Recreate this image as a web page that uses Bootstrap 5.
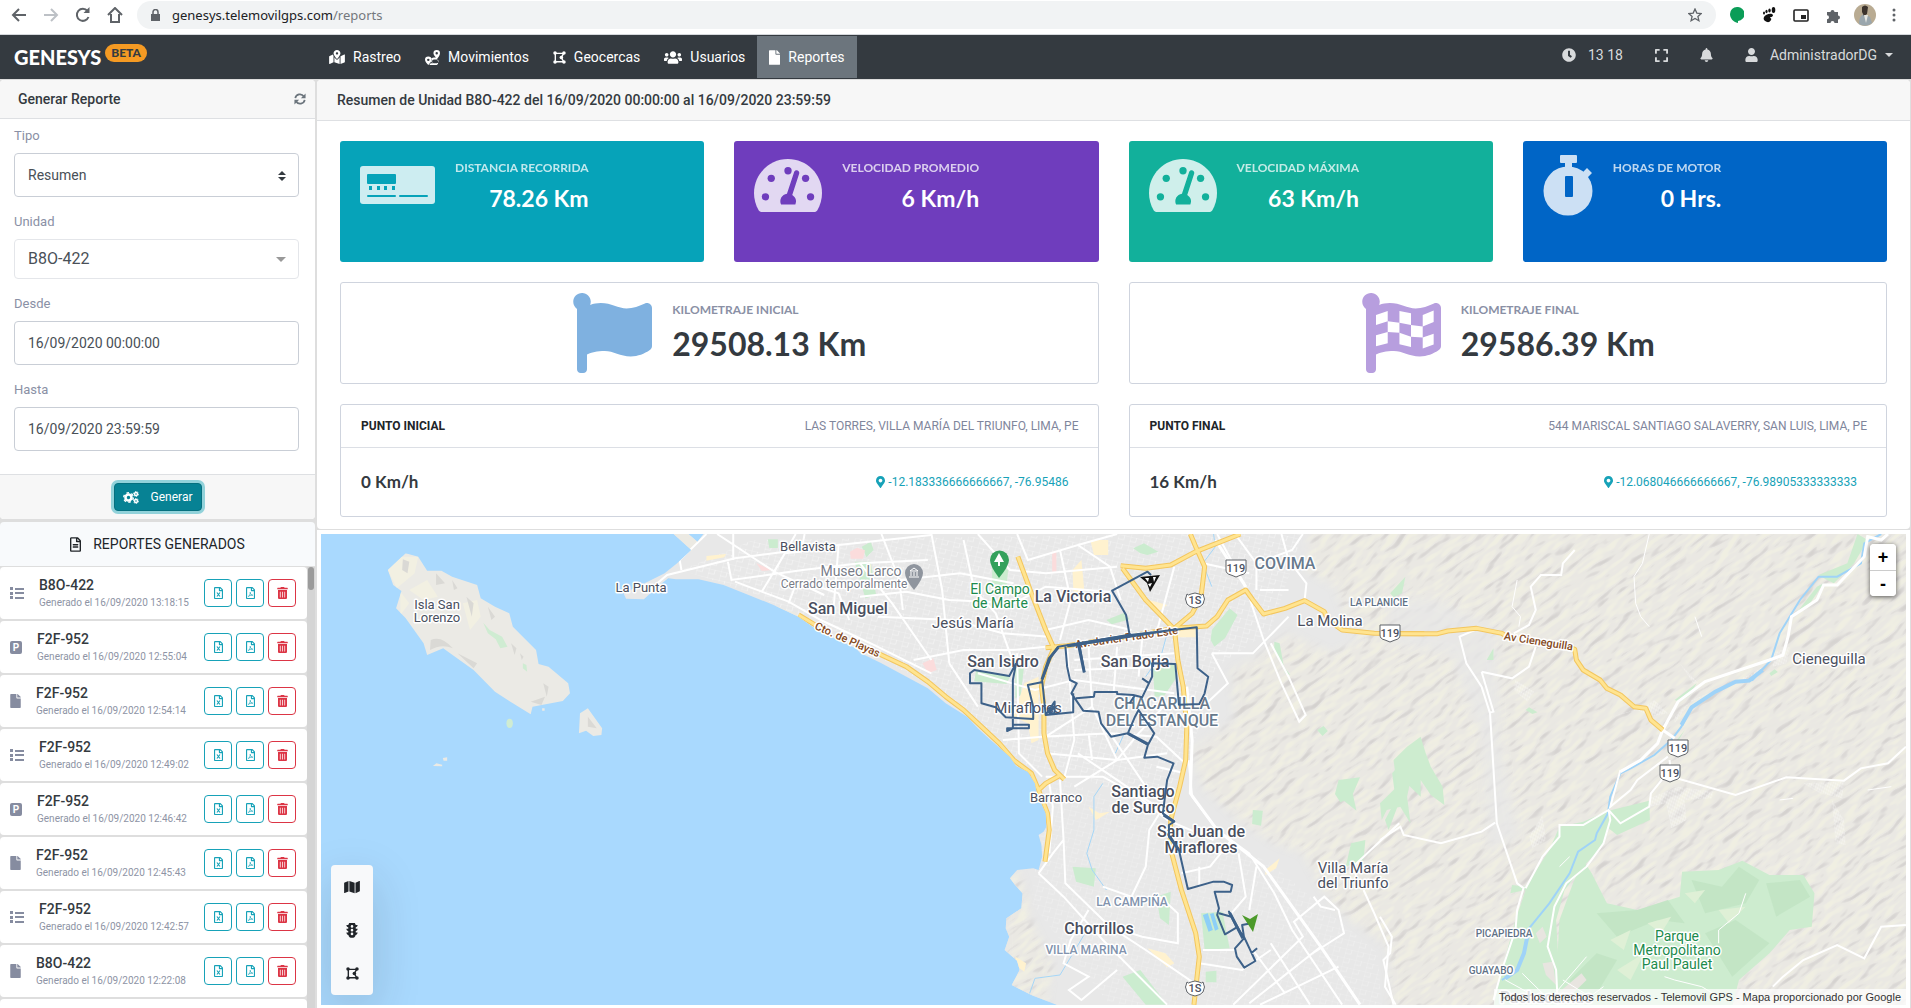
<!DOCTYPE html>
<html lang="es">
<head>
<meta charset="utf-8">
<meta name="viewport" content="width=device-width, initial-scale=1">
<title>Genesys - Reportes</title>
<link href="https://cdn.jsdelivr.net/npm/bootstrap@5.3.0/dist/css/bootstrap.min.css" rel="stylesheet">
<style>
body{font-family:Roboto,"Liberation Sans",sans-serif;font-size:14px;line-height:20px;color:#343a40;background:#dedede}
svg{display:block;flex:none}
button{font-family:inherit}
.browser{height:35px;background:#fff;border-bottom:1px solid #d5d8dc;padding:1px 10px 5px 9px}
.tool{border:0;background:none;padding:0;width:20px;display:flex;justify-content:center}
.omni{height:28px;border-radius:14px;background:#f1f3f4;font:13px/28px "Noto Sans",sans-serif;color:#74787d;padding:0 14px}
.omni b{font-weight:400;color:#202124}
.topnav{height:44px;background:#343a40;color:#fff;font-size:14px}
.brandbox{width:317px;padding-left:14px;font:900 20px/24px Lato,sans-serif;color:#fff}
.beta{background:#f59a23;color:#343a40;border-radius:9px;font:900 12px/18px Lato,sans-serif;padding:0 6px;margin-bottom:8px}
.topnav .nav-link{color:#fff;height:42px;padding:0 12px;gap:8px;display:flex;align-items:center}
.topnav .nav-link.active{background:#6c757d}
.userbar{color:#d8dadc;padding-right:18px;margin-bottom:4px}
.userbar button{color:inherit;border:0;background:none;padding:0;display:flex;align-items:center}
.userbar a{color:inherit;text-decoration:none}
.side{flex:0 0 315px}
.main{border-right:1px solid #dedede}
.panelbox{background:#fff;border-radius:4px;overflow:hidden;margin-top:1px}
.headbar{background:#f7f7f7;border-bottom:1px solid #dee0e3;font-weight:500;font-size:14px}
.side .headbar{height:39px;padding:0 9px 0 18px}
.main .headbar{height:41px;padding:0 20px}
.formarea{padding:7px 16px 23px 14px}
.formarea label{font-size:13px;line-height:20px;color:#8a90a5;margin-bottom:7px;display:block}
.field{height:44px;border:1px solid #c9ced6;border-radius:4px;padding:0 13px;font-size:14px;color:#495057;background:#fff;width:100%;display:block;margin-bottom:15px}
.selwrap{position:relative}
.selwrap svg{position:absolute;right:13px;top:18px}
select.field{appearance:none}
.field.soft{height:40px;border-color:#e4e6ea;font-size:16px}
.btnfoot{height:45px;background:#f7f7f7;border-top:1px solid #dee0e3}
.gen{background:#078294;border:1px solid #06707f;border-radius:4px;color:#fff;font-size:12px;height:28px;width:88px;padding:0 8px;box-shadow:0 0 0 3px #92d2da}
.listhead{height:45px;background:#f8fafc;border-bottom:1px solid #dedede;font-size:14px;color:#212529;margin-top:3px;border-radius:4px 4px 0 0}
.replist{list-style:none;margin:0;padding:0}
.replist li{height:52px;background:#fff;border-radius:4px;margin-bottom:2px;padding:0 11px 0 10px}
.replist h6{font-size:14px;line-height:18px;font-weight:500;margin:0;padding-top:1px;color:#343a40}
.replist small{font-size:10px;line-height:18px;color:#8e94a5;display:block}
.act{width:28px;height:28px;border:1px solid #17a2b8;color:#17a2b8;background:#fff;border-radius:4px;padding:0;display:flex;align-items:center;justify-content:center}
.act.del{border-color:#dc3545;color:#dc3545}
.rail{width:8px;background:#d5d5d5;padding:0 1px}
.rail div{height:23px;border-radius:3px;background:#9b9b9b}
.dash{padding:20px 23px 12px}
.dash .row{--bs-gutter-x:30px;--bs-gutter-y:20px}
.stat{height:121px;border-radius:3px;padding:14px 20px;color:#fff}
.stat .inner{height:60px;gap:20px}
.kick{font:700 12px/16px Lato,sans-serif}
.stat .kick{opacity:.75;margin-top:3px}
.num{font:700 23px/30px Lato,sans-serif;margin-top:7px}
.s1{background:#06a3b9;--bgc:#06a3b9}.s2{background:#6f3dbd;--bgc:#6f3dbd}.s3{background:#12b09b;--bgc:#12b09b}.s4{background:#0065c6;--bgc:#0065c6}
.outlined{border:1px solid #cfd4de;border-radius:3px;background:#fff}
.km{height:102px;gap:20px}
.km .kick{color:#8a90a5}
.km .num{font-size:32px;line-height:40px;color:#343a40;margin-top:6px}
.pt-head{height:43px;border-bottom:1px solid #dcdfe5;padding:0 19px 0 20px}
.pt-head b{font-size:12px;font-weight:700;color:#212529}
.pt-head span{font-size:12px;color:#7f869c}
.pt-body{height:68px;padding:0 29px 0 20px}
.pt-body b{font:700 17px/20px Lato,sans-serif}
.pt-body a{color:#17a2b8;text-decoration:none;font-size:12px;gap:3px}
.mapwrap{border-top:1px solid #dedede;padding:4px 4px 3px;min-height:0;background:#fff}
.mapbox{position:relative;overflow:hidden;background:#a9d9fe}
.mapbox>svg{width:100%;height:100%}
.zoomer{position:absolute;top:10px;right:10px;width:26px;background:#fff;border-radius:4px;box-shadow:0 1px 5px rgba(0,0,0,.65);overflow:hidden}
.zoomer button{display:block;width:26px;height:26px;border:0;background:#fff;font:700 18px/24px "Liberation Sans",sans-serif;color:#000;padding:0}
.zoomer button+button{border-top:1px solid #ccc}
.layers{position:absolute;left:10px;bottom:10px;width:42px;height:130px;background:#f8f9fa;border-radius:4px}
.layers button{border:0;background:none;padding:0;color:#212529}
.credit{position:absolute;right:0;bottom:0;background:rgba(255,255,255,.7);font:11px/16px "Liberation Sans",sans-serif;color:#333;padding:0 5px}
.lbl text{paint-order:stroke;stroke:#fff;stroke-width:3px;stroke-linejoin:round;text-anchor:middle;fill:#4a4f5e;font-family:Roboto,sans-serif}
.lbl .t16{font-size:16px;font-weight:500}
.lbl .t15{font-size:15px}
.lbl .t14{font-size:14px}
.lbl .t13{font-size:13px}
.lbl .t12{font-size:12px}
.lbl .area{font-size:16px;font-weight:500;fill:#67798c}
.lbl .mini{font-size:10px;font-weight:500;fill:#5f7186}
.lbl .zone{font-size:12px;font-weight:500;fill:#8293ad}
.lbl .green{font-size:14px;fill:#1c8b4d}
.lbl .rd{font-size:11px;font-weight:500;fill:#84491c}
.lbl .shield{font-size:11px;font-weight:500;stroke:none}
.geo *{vector-effect:non-scaling-stroke}
</style>
<script src="https://cdn.jsdelivr.net/npm/bootstrap@5.3.0/dist/js/bootstrap.bundle.min.js"></script>
</head>
<body class="vh-100 overflow-hidden d-flex flex-column">

<svg width="0" height="0" class="position-absolute" aria-hidden="true">
<defs>
<symbol id="i-file" viewBox="0 0 384 512"><path fill="currentColor" d="M224 136V0H24C10.700 0 0 10.700 0 24v464c0 13.300 10.700 24 24 24h336c13.300 0 24-10.700 24-24V160H248c-13.200 0-24-10.800-24-24zm160-14.100v6.100H256V0h6.100c6.400 0 12.500 2.500 17 7l97.900 98c4.500 4.500 7 10.600 7 16.900z"/></symbol>
<symbol id="i-filealt" viewBox="0 0 384 512"><path fill="currentColor" d="M288 248v28c0 6.600-5.400 12-12 12H108c-6.600 0-12-5.400-12-12v-28c0-6.600 5.400-12 12-12h168c6.600 0 12 5.400 12 12zm-12 72H108c-6.600 0-12 5.400-12 12v28c0 6.600 5.400 12 12 12h168c6.600 0 12-5.400 12-12v-28c0-6.600-5.400-12-12-12zm108-188.100V464c0 26.500-21.500 48-48 48H48c-26.500 0-48-21.500-48-48V48C0 21.500 21.500 0 48 0h204.100C264.800 0 277 5.100 286 14.100L369.900 98c9 8.900 14.100 21.200 14.100 33.900zm-128-80V128h76.100L256 51.900zM336 464V176H232c-13.300 0-24-10.700-24-24V48H48v416h288z"/></symbol>
<symbol id="i-fileo" viewBox="0 0 384 512"><path fill="currentColor" d="M369.900 97.900L286 14C277 5 264.800 0 252.100 0H48C21.500 0 0 21.500 0 48v416c0 26.500 21.500 48 48 48h288c26.500 0 48-21.500 48-48V131.900c0-12.700-5.100-25-14.100-34zM332.100 128H256V51.900l76.100 76.100zM48 464V48h160v104c0 13.300 10.700 24 24 24h104v288H48z"/></symbol>
<symbol id="i-xls" viewBox="0 0 384 512"><use href="#i-fileo"/><path d="M125 235l130 170M255 235L125 405" stroke="currentColor" stroke-width="48" fill="none"/></symbol>
<symbol id="i-pdf" viewBox="0 0 384 512"><use href="#i-fileo"/><path d="M100 405C150 370 190 290 180 225C185 300 230 345 290 350C220 345 150 360 100 405" stroke="currentColor" stroke-width="30" fill="none" stroke-linejoin="round"/></symbol>
<symbol id="i-trash" viewBox="0 0 448 512"><path fill="currentColor" d="M32 464a48 48 0 0 0 48 48h288a48 48 0 0 0 48-48V128H32zm272-256a16 16 0 0 1 32 0v224a16 16 0 0 1-32 0zm-96 0a16 16 0 0 1 32 0v224a16 16 0 0 1-32 0zm-96 0a16 16 0 0 1 32 0v224a16 16 0 0 1-32 0zM432 32H312l-9.400-18.700A24 24 0 0 0 281.100 0H166.800a23.720 23.720 0 0 0-21.400 13.300L136 32H16A16 16 0 0 0 0 48v32a16 16 0 0 0 16 16h416a16 16 0 0 0 16-16V48a16 16 0 0 0-16-16z"/></symbol>
<symbol id="i-list" viewBox="0 0 14 12"><path fill="currentColor" d="M0 0h3v3H0zM0 5h3v3H0zM0 9h3v3H0zM5 1h9v2H5zM5 5h9v2H5zM5 10h9v2H5z"/></symbol>
<symbol id="i-pin" viewBox="0 0 384 512"><path fill="currentColor" d="M172.268 501.670C26.970 291.031 0 269.413 0 192 0 85.961 85.961 0 192 0s192 85.961 192 192c0 77.413-26.970 99.031-172.268 309.670-9.535 13.774-29.930 13.773-39.464 0zM192 272c44.183 0 80-35.817 80-80s-35.817-80-80-80-80 35.817-80 80 35.817 80 80 80z"/></symbol>
<symbol id="i-clock" viewBox="0 0 512 512"><path fill="currentColor" d="M256,8C119,8,8,119,8,256S119,504,256,504,504,393,504,256,393,8,256,8Zm57.100,350.100L224.900,294c-3.100-2.300-4.900-5.900-4.900-9.700V116c0-6.600,5.400-12,12-12h48c6.600,0,12,5.400,12,12V249.700l63.500,46.200c5.400,3.900,6.500,11.400,2.600,16.800l-28.200,38.800c-3.900,5.300-11.400,6.500-16.800,2.600Z"/></symbol>
<symbol id="i-bell" viewBox="0 0 448 512"><path fill="currentColor" d="M224 512c35.320 0 63.970-28.650 63.970-64H160.030c0 35.350 28.650 64 63.970 64zm215.390-149.710c-19.320-20.760-55.470-51.990-55.470-154.290 0-77.700-54.480-139.900-127.940-155.160V32c0-17.670-14.320-32-31.980-32s-31.980 14.330-31.980 32v20.840C118.560 68.100 64.080 130.300 64.080 208c0 102.300-36.150 133.530-55.470 154.290-6 6.450-8.660 14.160-8.610 21.710.11 16.400 12.980 32 32.100 32h383.800c19.120 0 32-15.600 32.100-32 .05-7.550-2.610-15.270-8.610-21.710z"/></symbol>
<symbol id="i-user" viewBox="0 0 448 512"><path fill="currentColor" d="M224 256c70.700 0 128-57.300 128-128S294.700 0 224 0 96 57.300 96 128s57.300 128 128 128zm89.600 32h-16.700c-22.200 10.200-46.900 16-72.900 16s-50.600-5.800-72.900-16h-16.700C60.200 288 0 348.200 0 422.400V464c0 26.500 21.500 48 48 48h352c26.500 0 48-21.500 48-48v-41.600c0-74.200-60.200-134.400-134.400-134.400z"/></symbol>
<symbol id="i-users" viewBox="0 0 640 512"><path fill="currentColor" d="M96 224c35.300 0 64-28.700 64-64s-28.700-64-64-64-64 28.700-64 64 28.700 64 64 64zm448 0c35.300 0 64-28.700 64-64s-28.700-64-64-64-64 28.700-64 64 28.700 64 64 64zm32 32h-64c-17.600 0-33.500 7.100-45.100 18.600 40.300 22.100 68.900 62 75.100 109.400h66c17.700 0 32-14.300 32-32v-32c0-35.300-28.700-64-64-64zm-256 0c61.900 0 112-50.100 112-112S381.900 32 320 32 208 82.100 208 144s50.100 112 112 112zm76.800 32h-8.300c-20.800 10-43.900 16-68.500 16s-47.600-6-68.500-16h-8.300C179.600 288 128 339.600 128 403.200V432c0 26.500 21.500 48 48 48h288c26.500 0 48-21.500 48-48v-28.800c0-63.600-51.600-115.200-115.200-115.200zm-223.700-13.400C161.500 263.100 145.600 256 128 256H64c-35.300 0-64 28.700-64 64v32c0 17.700 14.300 32 32 32h65.900c6.300-47.400 34.900-87.300 75.200-109.400z"/></symbol>
<symbol id="i-map" viewBox="0 0 576 512"><path fill="currentColor" d="M0 117.660v346.320c0 11.320 11.430 19.060 21.940 14.860L160 416V32L20.120 87.950A32.006 32.006 0 0 0 0 117.660zM192 416l192 64V96L192 32v384zM554.060 33.160L416 96v384l139.880-55.950A31.996 31.996 0 0 0 576 394.340V48.020c0-11.320-11.430-19.060-21.940-14.860z"/></symbol>
<symbol id="i-mapped" viewBox="0 0 576 512"><path fill="currentColor" d="M288 0c-69.590 0-126 56.410-126 126 0 56.260 82.350 158.800 113.900 196.020 6.390 7.540 17.820 7.540 24.200 0C331.650 284.800 414 182.260 414 126 414 56.410 357.590 0 288 0zm0 168c-23.200 0-42-18.800-42-42s18.800-42 42-42 42 18.800 42 42-18.800 42-42 42zM20.120 215.950A32.006 32.006 0 0 0 0 245.660v250.320c0 11.320 11.430 19.060 21.940 14.860L160 448V214.920c-8.840-15.980-16.070-31.540-21.250-46.420L20.120 215.950zM288 359.670c-14.070 0-27.380-6.180-36.510-16.960-19.660-23.200-40.570-49.620-59.490-76.720v182l192 64V266c-18.920 27.090-39.820 53.520-59.490 76.720-9.130 10.770-22.440 16.950-36.510 16.950zm266.060-198.510L416 224v288l139.880-55.950A31.996 31.996 0 0 0 576 426.340V176.020c0-11.320-11.430-19.060-21.940-14.860z"/></symbol>
<symbol id="i-expand" viewBox="0 0 448 512"><path fill="currentColor" d="M0 180V56c0-13.300 10.700-24 24-24h124c6.600 0 12 5.400 12 12v40c0 6.600-5.400 12-12 12H64v84c0 6.600-5.400 12-12 12H12c-6.600 0-12-5.400-12-12zM288 44v40c0 6.600 5.400 12 12 12h84v84c0 6.600 5.400 12 12 12h40c6.600 0 12-5.400 12-12V56c0-13.300-10.700-24-24-24H300c-6.600 0-12 5.400-12 12zm148 276h-40c-6.600 0-12 5.400-12 12v84h-84c-6.600 0-12 5.400-12 12v40c0 6.600 5.400 12 12 12h124c13.300 0 24-10.700 24-24V332c0-6.600-5.400-12-12-12zM160 468v-40c0-6.600-5.400-12-12-12H64v-84c0-6.600-5.400-12-12-12H12c-6.600 0-12 5.400-12 12v124c0 13.300 10.700 24 24 24h124c6.600 0 12-5.400 12-12z"/></symbol>
<symbol id="i-route" viewBox="0 0 16 16"><path fill="currentColor" fill-rule="evenodd" d="M12.500 0A3.500 3.500 0 0 0 9 3.500C9 5.300 11 7.500 11.600 8H9.500a3 3 0 0 0 0 6H6c-.5.900-1 1.500-1.500 2h8a3.500 3.500 0 0 0 0-6H9.500a1 1 0 0 0 0 0h3c1-1 3.500-4 3.500-6.500A3.500 3.500 0 0 0 12.500 0zm0 2.200a1.300 1.300 0 1 1 0 2.600 1.300 1.300 0 0 1 0-2.600zM9.500 10h3a1.500 1.500 0 0 1 0 4H9.500a2 2 0 0 1 0-4zM3.500 7A3.500 3.500 0 0 0 0 10.500C0 12.500 2.500 15 3.500 16 4.500 15 7 12.500 7 10.500A3.500 3.500 0 0 0 3.500 7zm0 2.200a1.300 1.300 0 1 1 0 2.600 1.300 1.300 0 0 1 0-2.600z"/></symbol>
<symbol id="i-poly" viewBox="0 0 14 14"><path d="M2.500 2.500h9L9 7l2.500 4.500h-9z" fill="none" stroke="currentColor" stroke-width="1.500"/><g fill="currentColor"><circle cx="2.200" cy="2.200" r="1.900"/><circle cx="11.800" cy="2.200" r="1.900"/><circle cx="9" cy="7" r="1.900"/><circle cx="2.200" cy="11.800" r="1.900"/><circle cx="11.800" cy="11.800" r="1.900"/></g></symbol>
<symbol id="i-light" viewBox="0 0 12 16"><path fill="currentColor" fill-rule="evenodd" d="M3 0h6l1 2h2c0 1.200-.8 2.200-2 2.600V6h2c0 1.200-.8 2.200-2 2.600V10h2c0 1.200-.9 2.300-2.100 2.700A4 4 0 0 1 2.100 12.700C.9 12.300 0 11.200 0 10h2V8.600C.8 8.200 0 7.200 0 6h2V4.600C.8 4.200 0 3.200 0 2h2zM6 2.200a1.400 1.400 0 1 0 0 2.800 1.400 1.400 0 0 0 0-2.800zm0 4a1.400 1.400 0 1 0 0 2.800 1.400 1.400 0 0 0 0-2.800zm0 4a1.400 1.400 0 1 0 0 2.800 1.400 1.400 0 0 0 0-2.800z"/></symbol>
<symbol id="i-sync" viewBox="0 0 14 14"><path d="M1.500 6A5.500 5.500 0 0 1 11.500 4M12.500 8A5.500 5.500 0 0 1 2.500 10" fill="none" stroke="currentColor" stroke-width="2"/><path fill="currentColor" d="M13.500.5V6H8zM.5 13.500V8H6z"/></symbol>
<symbol id="i-cogs" viewBox="0 0 16 13"><g fill="none" stroke="currentColor"><circle cx="5.500" cy="6.500" r="3" stroke-width="2.600"/><circle cx="5.500" cy="6.500" r="4.800" stroke-width="1.400" stroke-dasharray="2.500 2.500"/><circle cx="13" cy="3" r="1.500" stroke-width="1.400"/><circle cx="13" cy="3" r="2.500" stroke-width=".9" stroke-dasharray="1.500 1.100"/><circle cx="13" cy="10" r="1.500" stroke-width="1.400"/><circle cx="13" cy="10" r="2.500" stroke-width=".9" stroke-dasharray="1.500 1.100"/></g></symbol>
<symbol id="i-gauge" viewBox="0 32 576 448"><path fill="#fff" fill-opacity=".8" d="M288 32C129 32 0 160 0 320c0 53 14 102 39 145 6 10 17 15 28 15h442c12 0 22-5 28-15 25-43 39-92 39-145C576 160 447 32 288 32z"/><g fill="var(--bgc)"><circle cx="288" cy="131" r="31"/><circle cx="146" cy="195" r="31"/><circle cx="97" cy="352" r="31"/><circle cx="479" cy="352" r="31"/><circle cx="437" cy="195" r="31"/><path d="M229 416a64 64 0 0 1 50-91L340 142c8-28 50-16 43 12L324 336c30 20 40 50 26 80z"/></g></symbol>
<symbol id="i-flag" viewBox="0 0 512 512"><path fill="currentColor" d="M349.565 98.783C295.978 98.783 251.721 64 184.348 64c-24.955 0-47.309 4.384-68.045 12.013a55.947 55.947 0 0 0 3.586-23.562C118.117 24.015 94.806 1.206 66.338.048 34.345-1.254 8 24.296 8 56c0 19.026 9.497 35.825 24 45.945V488c0 13.255 10.745 24 24 24h16c13.255 0 24-10.745 24-24v-94.400c28.311-12.064 63.582-22.122 114.435-22.122 53.588 0 97.844 34.783 165.217 34.783 48.169 0 86.667-16.294 122.505-40.858C506.840 359.452 512 349.571 512 339.045v-243.100c0-23.393-24.269-38.870-45.485-29.016-34.338 15.948-76.454 31.854-116.950 31.854z"/></symbol>
<path id="shield119" d="M-10-8h20v10q0 4-5 5l-5 2-5-2q-5-1-5-5z" fill="#fff" stroke="#5f6368"/>
<path id="shield1s" d="M-8-6q1 2 4 0l4-1 4 1q3 2 4 0 3 5 0 10-2 3-8 4-6-1-8-4-3-5 0-10z" fill="#fff" stroke="#5f6368"/>
<filter id="relief" x="0" y="0" width="100%" height="100%" color-interpolation-filters="sRGB">
<feTurbulence type="fractalNoise" baseFrequency=".014 .036" numOctaves="2" seed="8"/>
<feColorMatrix values="0 0 0 0 0 0 0 0 0 0 0 0 0 0 0 1 0 0 0 0"/>
<feDiffuseLighting surfaceScale="13" diffuseConstant="1" lighting-color="#fff"><feDistantLight azimuth="250" elevation="52"/></feDiffuseLighting>
<feComponentTransfer><feFuncR type="table" tableValues=".83 .84 .87 .917 .920 .945"/><feFuncG type="table" tableValues=".82 .83 .86 .910 .914 .940"/><feFuncB type="table" tableValues=".81 .82 .85 .890 .892 .890"/></feComponentTransfer>
</filter>
<filter id="soft"><feGaussianBlur stdDeviation="12"/></filter>
<pattern id="blocks" width="34" height="27" patternUnits="userSpaceOnUse" patternTransform="rotate(14)"><path d="M0 0H34M0 0V27M17 0v14M0 14h17" fill="none" stroke="#fff" stroke-width="1.300" opacity=".8"/></pattern>
<pattern id="tiny" width="5" height="4" patternUnits="userSpaceOnUse" patternTransform="rotate(-12)"><path d="M0 0H5M0 0V4" fill="none" stroke="#fff" stroke-width="1"/></pattern>
</defs>
</svg>

<div class="browser flex-shrink-0 d-flex align-items-center">
  <div class="d-flex align-items-center" style="gap:12px">
    <button class="tool" aria-label="Atrás"><svg width="16" height="14" fill="none" stroke="#5f6368" stroke-width="2"><path d="M15 7H2M8 1L2 7l6 6"/></svg></button>
    <button class="tool" aria-label="Adelante"><svg width="16" height="14" fill="none" stroke="#bdc1c6" stroke-width="2"><path d="M1 7h13M8 1l6 6-6 6"/></svg></button>
    <button class="tool" aria-label="Recargar"><svg width="16" height="16" fill="none" stroke="#5f6368" stroke-width="2"><path d="M13.500 10A6 6 0 1 1 12.500 4"/><path d="M14.500 0v6h-6z" fill="#5f6368" stroke="none"/></svg></button>
    <button class="tool" aria-label="Inicio"><svg width="16" height="16" fill="none" stroke="#5f6368" stroke-width="2"><path d="M1 8L8 1l7 7M4 7v8h8V7"/></svg></button>
  </div>
  <div class="omni flex-fill d-flex align-items-center" style="margin-left:12px">
    <svg width="9" height="12" viewBox="0 0 9 12"><path fill="#5f6368" d="M0 5h9v7H0z"/><path d="M2 5V3a2.500 2.500 0 0 1 5 0v2" fill="none" stroke="#5f6368" stroke-width="1.500"/></svg>
    <span class="ms-2 ps-1 flex-fill"><b>genesys.telemovilgps.com</b>/reports</span>
    <svg width="14" height="14" viewBox="0 0 14 14"><path d="M7 1l1.800 4.100 4.400.4-3.300 2.900 1 4.300L7 10.400l-3.900 2.300 1-4.300L.8 5.500l4.400-.4z" fill="none" stroke="#5f6368" stroke-width="1.300"/></svg>
  </div>
  <div class="d-flex align-items-center" style="gap:12px;margin-left:11px">
    <button class="tool" aria-label="Hangouts"><svg width="14" height="16"><path d="M7 0a7 7 0 0 1 1 14v2c-5-1-8-5-8-9a7 7 0 0 1 7-7z" fill="#0b9d58"/></svg></button>
    <button class="tool" aria-label="Gnome"><svg width="14" height="16"><g fill="#111"><ellipse cx="11.500" cy="3" rx="1.800" ry="3"/><ellipse cx="7.500" cy="3.500" rx="1.200" ry="2"/><ellipse cx="4.500" cy="4.500" rx="1.100" ry="1.700"/><ellipse cx="2" cy="6" rx="1" ry="1.500"/><path d="M10 7c2 1 .5 3-1 3s-1 1 0 1.500S8 16 5 15 1 12 2 10s5-4 8-3z"/></g></svg></button>
    <button class="tool" aria-label="Ventana flotante"><svg width="16" height="13"><rect x="1" y="1" width="14" height="11" rx="1" fill="none" stroke="#222" stroke-width="1.600"/><path d="M8 6h5v4H8z" fill="#222"/></svg></button>
    <button class="tool" aria-label="Extensiones"><svg width="15" height="15"><path fill="#5f6368" d="M1 4h3.500a2 2 0 1 1 4 0H12v3.500a2 2 0 1 1 0 4V15H8.500a2 2 0 0 0-4 0H1v-3.700a2 2 0 0 0 0-4z"/></svg></button>
    <button class="tool" aria-label="Perfil"><svg width="22" height="22"><circle cx="11" cy="11" r="11" fill="#b9ab92"/><path d="M5 20c0-6 2-9 5-10l6 3 2 6q-6 5-13 1z" fill="#9aa6ad"/><path d="M8 3q3-3 6 0l-1 7-3 2-2-4z" fill="#3b322c"/><path d="M10 11l2 8 2-8z" fill="#e6e6e2"/></svg></button>
    <button class="tool" aria-label="Menú" style="width:14px"><svg width="4" height="16" fill="#5f6368"><circle cx="2" cy="3" r="1.500"/><circle cx="2" cy="8" r="1.500"/><circle cx="2" cy="13" r="1.500"/></svg></button>
  </div>
</div>

<nav class="topnav flex-shrink-0 d-flex align-items-center">
  <div class="brandbox d-flex align-items-center gap-1"><span>GENESYS</span><span class="beta">BETA</span></div>
  <div class="nav flex-nowrap">
    <a class="nav-link" href="#"><svg width="16" height="14"><use href="#i-mapped"/></svg>Rastreo</a>
    <a class="nav-link" href="#"><svg width="15" height="15"><use href="#i-route"/></svg>Movimientos</a>
    <a class="nav-link" href="#"><svg width="13" height="13"><use href="#i-poly"/></svg>Geocercas</a>
    <a class="nav-link" href="#"><svg width="18" height="15"><use href="#i-users"/></svg>Usuarios</a>
    <a class="nav-link active" href="#"><svg width="11" height="15"><use href="#i-file"/></svg>Reportes</a>
  </div>
  <div class="userbar ms-auto d-flex align-items-center" style="gap:32px">
    <span class="d-flex align-items-center gap-2"><svg width="14" height="14" class="me-1"><use href="#i-clock"/></svg>13 18</span>
    <button aria-label="Pantalla completa"><svg width="13" height="15"><use href="#i-expand"/></svg></button>
    <button aria-label="Notificaciones"><svg width="13" height="14"><use href="#i-bell"/></svg></button>
    <a href="#" class="d-flex align-items-center gap-2"><svg width="13" height="14" class="me-1"><use href="#i-user"/></svg>AdministradorDG<svg width="8" height="4"><path d="M0 0h8L4 4z" fill="currentColor"/></svg></a>
  </div>
</nav>

<div class="d-flex flex-fill" style="gap:2px;min-height:0">
  <aside class="side d-flex flex-column overflow-hidden">
    <form class="panelbox flex-shrink-0" onsubmit="return false">
      <div class="headbar d-flex align-items-center justify-content-between">Generar Reporte<svg width="12" height="12" color="#6c757d"><use href="#i-sync"/></svg></div>
      <div class="formarea">
        <label for="tipo">Tipo</label>
        <div class="selwrap"><select id="tipo" class="field"><option>Resumen</option></select><svg width="8" height="10"><path d="M4 0l4 4H0zM4 10L0 6h8z" fill="#343a40"/></svg></div>
        <label for="unidad">Unidad</label>
        <div class="selwrap"><select id="unidad" class="field soft"><option>B8O-422</option></select><svg width="10" height="5"><path d="M0 0h10L5 5z" fill="#999"/></svg></div>
        <label for="desde">Desde</label>
        <input id="desde" class="field" value="16/09/2020 00:00:00">
        <label for="hasta">Hasta</label>
        <input id="hasta" class="field mb-0" value="16/09/2020 23:59:59">
      </div>
      <div class="btnfoot d-flex align-items-center justify-content-center">
        <button class="gen d-flex align-items-center justify-content-between"><svg width="16" height="13"><use href="#i-cogs"/></svg>Generar</button>
      </div>
    </form>
    <div class="listhead flex-shrink-0 d-flex align-items-center justify-content-center gap-2"><svg width="11" height="15" class="me-1"><use href="#i-filealt"/></svg>REPORTES GENERADOS</div>
    <div class="d-flex flex-fill overflow-hidden" style="min-height:0">
      <ul class="replist flex-fill" id="reports"></ul>
      <div class="rail"><div></div></div>
    </div>
  </aside>

  <main class="main flex-fill d-flex flex-column" style="min-width:0">
    <section class="panelbox flex-shrink-0">
      <div class="headbar d-flex align-items-center">Resumen de Unidad B8O-422 del 16/09/2020 00:00:00 al 16/09/2020 23:59:59</div>
      <div class="dash">
        <div class="row g-4">
          <div class="col-3"><div class="stat s1"><div class="inner d-flex align-items-center">
            <svg width="75" height="38"><rect width="75" height="38" rx="3" fill="#fff" fill-opacity=".8"/><g fill="#06a3b9"><rect x="7" y="8" width="29" height="10" rx="1"/><path d="M9 20h3v4H9zM17 20h3v4h-3zM24 20h3v4h-3zM32 20h3v4h-3z"/><rect x="7" y="29" width="29" height="2" rx="1"/><rect x="39" y="29" width="29" height="2" rx="1"/></g></svg>
            <div class="text-end"><div class="kick">DISTANCIA RECORRIDA</div><div class="num">78.26 Km</div></div></div></div></div>
          <div class="col-3"><div class="stat s2"><div class="inner d-flex align-items-center">
            <svg width="68" height="53"><use href="#i-gauge"/></svg>
            <div class="text-end"><div class="kick">VELOCIDAD PROMEDIO</div><div class="num">6 Km/h</div></div></div></div></div>
          <div class="col-3"><div class="stat s3"><div class="inner d-flex align-items-center">
            <svg width="68" height="53"><use href="#i-gauge"/></svg>
            <div class="text-end"><div class="kick">VELOCIDAD MÁXIMA</div><div class="num">63 Km/h</div></div></div></div></div>
          <div class="col-3"><div class="stat s4"><div class="inner d-flex align-items-center">
            <svg width="50" height="61" viewBox="0 0 50 61"><g fill="#cce0f4"><circle cx="25" cy="36" r="24.500"/><rect x="17" y="0" width="17" height="8" rx="1"/><path d="M22 7h7v6h-7zM39 18l5-5 5 5-5 5z"/></g><rect x="22" y="21" width="8" height="21" rx="1" fill="#0065c6"/></svg>
            <div class="text-end"><div class="kick">HORAS DE MOTOR</div><div class="num">0 Hrs.</div></div></div></div></div>
          <div class="col-6"><div class="outlined km d-flex align-items-center justify-content-center">
            <svg width="80" height="80" color="#7fb1e0"><use href="#i-flag"/></svg>
            <div><div class="kick">KILOMETRAJE INICIAL</div><div class="num">29508.13 Km</div></div></div></div>
          <div class="col-6"><div class="outlined km d-flex align-items-center justify-content-center">
            <svg width="80" height="80" viewBox="0 0 512 512" color="#b79ede"><use href="#i-flag"/><path fill="#fff" d="M96 140l75-25v65l-75 25zM171 180l75 10v65l-75-5zM246 115l74 15v75l-74-15zM320 205l75 10v70l-75-5zM395 140l70-28v73l-70 30zM96 270l75-20v72l-75 18zM246 255l74 25v65l-74-17zM395 285l70-25v70l-70 25z"/></svg>
            <div><div class="kick">KILOMETRAJE FINAL</div><div class="num">29586.39 Km</div></div></div></div>
          <div class="col-6"><div class="outlined">
            <div class="pt-head d-flex align-items-center justify-content-between"><b>PUNTO INICIAL</b><span>LAS TORRES, VILLA MARÍA DEL TRIUNFO, LIMA, PE</span></div>
            <div class="pt-body d-flex align-items-center justify-content-between"><b>0 Km/h</b><a href="#" class="d-flex align-items-center"><svg width="9" height="12"><use href="#i-pin"/></svg>-12.183336666666667, -76.95486</a></div></div></div>
          <div class="col-6"><div class="outlined">
            <div class="pt-head d-flex align-items-center justify-content-between"><b>PUNTO FINAL</b><span>544 MARISCAL SANTIAGO SALAVERRY, SAN LUIS, LIMA, PE</span></div>
            <div class="pt-body d-flex align-items-center justify-content-between"><b>16 Km/h</b><a href="#" class="d-flex align-items-center"><svg width="9" height="12"><use href="#i-pin"/></svg>-12.068046666666667, -76.98905333333333</a></div></div></div>
        </div>
      </div>
    </section>

    <section class="mapwrap flex-fill d-flex">
      <div class="mapbox flex-fill">
        <svg viewBox="321 534 1585 471" preserveAspectRatio="xMidYMid slice" role="img" aria-label="Mapa del recorrido">
          <defs>
            <path id="coast" d="M-522 42L-472 90-512 130-547 160-600 188-662 220-655 236-605 238-572 205-537 175-515 178-452 178-382 195-312 225-242 255-172 290-112 335-12 385 0 398 60 430 130 470 190 505 240 550 300 590 330 625 360 655 420 710 437 738 470 755 490 790 495 820 520 880 522 920 514 935 500 945 508 975 510 1010 500 1050 485 1045 440 1050 420 1075 432 1092 455 1120 452 1165 410 1195 408 1225 418 1250 405 1290 440 1322 447 1350 425 1395 480 1425 550 1454V1480H3100V30H-430L-455 65-480 42z"/>
            <clipPath id="land"><use href="#coast"/></clipPath>
            <mask id="hillmask"><path filter="url(#soft)" fill="#fff" d="M1260 0L1250 150 1330 200 1360 300 1400 360 1320 400 1200 340 1100 420 1040 450 1050 600 930 690 960 800 1050 890 1160 970 1240 1000 1290 1100 1350 1180 1480 1280 1490 1520 3200 1520V-50z"/><path filter="url(#soft)" fill="#000" d="M1480 230L1620 240 1780 330 1790 640 1840 950 1760 990 1740 640 1650 400 1480 370z" opacity=".75"/><path filter="url(#soft)" fill="#fff" d="M410 1060L450 1060 480 1200 540 1340 520 1460 400 1460z"/></mask>
            <clipPath id="islands"><path d="M240 100L275 110 300 152 340 152 370 170 440 195 450 235 490 260 530 280 540 320 605 390 612 432 640 440 695 490 700 520 680 543 595 560 590 583 540 550 490 515 430 450 380 412 345 385 300 405 290 370 240 295 213 265 228 213 205 195 190 150z"/></clipPath>
          </defs>

          <g class="geo" transform="translate(860 520) scale(.35714 .33333)">
            <use href="#coast" fill="#e8e8e8"/>
            <g clip-path="url(#land)">
              <path fill="#eceae3" d="M-522 42L-480 42-455 65-472 95zM-240 256L-170 282-110 325-120 338-180 296z"/>
              <g mask="url(#hillmask)"><g transform="rotate(-38 1500 700)"><rect x="0" y="-700" width="3200" height="2900" filter="url(#relief)"/></g></g>
              <path fill="url(#blocks)" d="M-500 150L-300 60 900 42 1240 42 1150 330 1000 440 920 720 870 900 600 760 470 740 200 500 0 380-300 220z"/>
              <path fill="url(#blocks)" d="M520 760L860 900 950 1300 930 1454 700 1454 480 1150zM880 900L1150 1030 1450 1300 1460 1454 960 1454z" opacity=".6"/>
              <!-- parks -->
              <g fill="#cbeccf">
                <path d="M-258 58h28v26h-24zM5 80l25-15 8 25-20 22zM-15 125l45 0 15 100-30 10zM370 130l45 20-5 50-40-10zM690 300l50-22 15 20-50 15zM985 330l50-65 22 20-35 70-30 25-10-20zM1160 365l15 5 15 90 15 5-15-20-30-50zM325 450l95 20-10 22-90-8zM435 440l25-5-10 90-15 10zM820 440l60-10 5 45-35 55-25 0zM595 1040l65 5-5 55-50-15zM955 1180l60-5 20 110-70 5zM735 1370l50-20 50 70 25 34-60 0zM830 1130l40-15-5 100-25-20zM968 1355l30-3v35h-30zM765 85l30-15 40 25-30 10-20-5zM1340 780l60-8-20 50 10 50-35-30-10 5-15-25zM1490 760l55-70 25-10v150l-40-40-50 140-10-30 30-60zM1375 970l40-10-5 60-50 20zM1100 870l28 2-5 45-25-5zM1280 630l18-12 12 15-15 15z"/>
              </g>
              <path fill="#8dcff7" d="M960 1185l14-5 14 50-12 5zM980 1182l10-3 14 48-10 5z"/>
              <g fill="#fff2cf"><path d="M595 150l25-30 8 90-30 15zM645 60h50v45h-40zM885 330h55v22h-55zM810 240l50 15-30 25zM460 490l40-20 0 190-20 10-10-60-40-20zM-430 108l55-6-5 10-50 10zM640 860l30 20 30-5-30 20-10 5-10-20zM1135 1050l40-35-10 30-30 20zM805 1285l50 15 25 30-20 12zM435 1310l30 20-5 25-25-20z"/></g>
              <g fill="#fbdcdc"><path d="M-28 95l20-12 22 8-5 25-35 0zM-290 130l45 20-30 3zM175 430l30-15 10 35-25 10zM538 95h12v60h-12z"/></g>
              <g fill="none" stroke="#a5d6f7" stroke-width="1"><path d="M990 42L995 80 960 130 985 200M860 340L845 400 800 470M740 640L715 700M680 790L655 830 655 930 635 1000 650 1050 690 1110M630 1240L560 1365 490 1375 475 1420"/></g>
              <!-- streets -->
              <g fill="none" stroke="#fff" stroke-width="2">
                <path d="M-590 210L-540 165-350 115-60 75 200 45M-500 150L-505 120-430 42M-400 42L-240 155-100 225M-240 155L-180 42M-370 125L-360 180-160 150 0 130 190 120M-355 42V120M-275 215L-210 100-165 95-155 42M-200 250L-175 180-60 220-30 300M-60 75L-75 280M-350 185L-200 245-110 300 30 370 200 460"/>
                <path d="M0 130L90 250 200 420M60 42L110 180 120 270M0 230L130 215 250 240 440 250M200 42L230 210 250 430M110 180L280 160 430 190M290 60L320 210 380 280 430 430M330 42L420 150 520 160 720 140M440 42L470 120 610 75 700 140 730 240M610 75L720 42M560 90L590 240 560 360M520 330L640 300 760 330M50 290L260 300 400 340 530 350M150 420L290 390 430 390 520 380M250 430L330 560M430 250L520 200 700 215"/>
                <path d="M440 400L445 700 510 770M330 460L490 510 600 480 880 520M400 660L510 650 700 640 830 650 910 730M520 650L650 560 720 720 600 800M580 380L600 660 570 780M640 380L650 560M720 380L710 520M790 360L780 470M520 700L720 720 860 700M720 720L780 640 850 560M610 700L830 860 880 900M520 770L680 770 780 830 860 900 990 960M650 720L640 640M700 640L800 800M830 740L910 760M600 420L880 400M600 450L860 440"/>
                <path d="M1000 42L1080 200 1130 360 1180 490 1230 605 1248 585 1200 470 1150 370M1050 42L1110 130 1210 90 1240 42M1180 42L1200 120 1250 190 1245 240M1110 130L1110 210M985 400L1100 400 1200 290M985 400L1030 490 960 560M960 130L1090 160M880 140L830 340M1120 210L1200 210"/>
                <path d="M560 780L570 960 575 1090 700 1220 800 1290 950 1400M500 1060L570 1130 680 1260 860 1454M530 1000L540 860 530 790M570 960L540 1000 500 1060M640 1170L590 1260 570 1330 640 1370 585 1410 620 1440 720 1350M680 1100L760 1130 800 1040 810 930 850 860M700 1220L790 1250 890 1270 890 1180 840 1130M960 1290L1050 1290M950 1330L1070 1350 1150 1290"/>
                <path d="M920 720L930 830 1000 930 1090 1000 1160 1120 1210 1230 1350 1454M900 1060L980 1040 1040 960M950 1040V1100M1060 1000L1080 1130 1040 1180M1110 1040L1090 1170M1045 1454L1240 1250 1215 1205 1300 1130 1340 1170 1355 1240 1260 1305M1090 1450L1290 1280M1120 1454L1340 1340M1150 1270L1260 1454M1100 1290L1190 1420M1270 1130L1290 1160 1330 1170M1410 1110L1440 1180 1480 1280 1470 1400 1500 1454M1400 1100L1380 1040 1480 940 1510 910"/>
                <path stroke-width="3" d="M995 60L1080 200M915 500L930 660 925 820 1000 930 1130 1040 1290 1280 1400 1454"/>
              </g>
              <!-- highways -->
              <g fill="none" stroke-linejoin="round">
                <path stroke="#f3c65e" stroke-width="5" d="M-172 285L-110 325M-15 370L60 405 130 440 190 485 240 530 290 570 340 620 390 670 430 720 480 760 500 810 525 880 530 930 518 1025M442 110L480 220 520 330 543 385 520 440 508 500 515 560 515 640 525 700 545 750 572 778M500 810L520 790 557 768M520 383L580 377 760 348 880 325 970 318 1000 290 1030 240 1080 210 1100 240 1130 282 1190 265 1245 242 1300 275 1310 300 1350 330 1440 340 1580 341M925 42L940 80 965 140 955 230 930 280 880 325 890 420 905 500 915 620 912 720 895 800 880 860 870 900 868 980 900 1110 940 1240 950 1310 935 1454M730 137L800 145 870 135 940 95 1065 42M735 145L800 240 882 330"/>
                <path stroke="#ffe490" stroke-width="3" d="M-172 285L-110 325M-15 370L60 405 130 440 190 485 240 530 290 570 340 620 390 670 430 720 480 760 500 810 525 880 530 930 518 1025M442 110L480 220 520 330 543 385 520 440 508 500 515 560 515 640 525 700 545 750 572 778M500 810L520 790 557 768M520 383L580 377 760 348 880 325 970 318 1000 290 1030 240 1080 210 1100 240 1130 282 1190 265 1245 242 1300 275 1310 300 1350 330 1440 340 1580 341M925 42L940 80 965 140 955 230 930 280 880 325 890 420 905 500 915 620 912 720 895 800 880 860 870 900 868 980 900 1110 940 1240 950 1310 935 1454M730 137L800 145 870 135 940 95 1065 42M735 145L800 240 882 330"/>
              </g>
            </g>
          </g>

          <!-- islands -->
          <g class="geo" transform="translate(320 520) scale(.35714 .33333)">
            <g clip-path="url(#islands)">
              <path fill="#ebeae5" d="M150 80h600v520H150z"/>
              <path fill="#f2f0e2" d="M190 150L225 110 275 110 265 160 215 205zM250 210L300 180 330 230 290 240zM400 250L440 240 450 290 420 330zM225 215L250 250 225 285z"/>
              <path fill="#dad9d5" d="M232 118L250 125 245 160 230 150zM325 160L350 190 325 195zM370 180L385 205 375 210zM410 230L430 250 425 290zM310 360Q340 345 372 385Q340 370 308 390zM385 400L440 430 430 445zM535 370L550 385 545 405zM560 400L570 410 565 420zM470 260L490 290 480 300zM625 490L640 500 635 530zM590 545L630 530 620 555z"/>
              <path fill="#cfecd2" d="M457 308L475 330 510 350 525 380 505 385 492 358 470 340zM568 430l10 5 2 20-12-10z"/>
            </g>
            <path fill="#ebeae5" d="M750 565L790 625 788 645 765 648 745 632 725 640 728 580z"/>
            <path fill="#dad9d5" d="M750 590L775 625 750 620z"/>
            <ellipse cx="531" cy="610" rx="9" ry="14" fill="#cfecd2"/>
            <path fill="#ebeae5" d="M344 714l12-2v10h-10zM316 738l10-8 16 4v5zM622 565h7v7h-7z"/>
          </g>

          <!-- eastern valleys -->
          <g class="geo" transform="translate(1380 520) scale(.33865 .33333)">
            <g fill="#cdeccf">
              <path d="M530 920L600 905 675 872 795 842 797 900 700 945 675 925 660 975 600 1040 545 1110 520 1200 530 1380 560 1460H335L360 1350 400 1200 430 1110 385 1120 390 1095 430 1100 500 990z"/>
              <path d="M625 1060L670 1150 760 1170 885 1130 892 1055 1000 1050 1070 1022 1150 1065 1250 1065 1283 1120 1275 1220 1210 1230 1150 1300 1060 1380 1040 1460H560L520 1380 530 1200 570 1090 600 1020z"/>
              <path d="M120 650L135 700 150 740 185 800 190 855 150 825 120 780 90 780 80 830 90 910 60 860 20 870 5 900 0 850 50 800 40 720 80 680zM30 220L75 170 65 220 40 232zM315 420l20-35v35zM430 570l10-8 25 15-15 5zM1225 285L1290 200 1310 190 1270 250zM1295 165L1380 130 1410 42 1440 60 1400 130 1340 190 1320 180zM870 540l65-50-20 35-30 20zM845 700L900 630 870 680zM1150 460l15-12 10 8-20 12z"/>
            </g>
            <g fill="#bfe3c2" opacity=".75"><path d="M640 1180L760 1170 850 1140 900 1210 820 1200 700 1250zM920 1080L1010 1100 1060 1040 1120 1080 1080 1150 960 1180zM1140 1090L1240 1080 1270 1130 1170 1190zM560 1380L640 1300 700 1320 620 1454 570 1454zM960 1240L1050 1200 1150 1270 1040 1370z"/></g>
            <g fill="#dff0d6"><path d="M680 1260L740 1230 720 1290zM790 1210L860 1190 830 1240zM900 1120L960 1110 930 1150zM1000 1170L1080 1160 1030 1210zM700 1350L780 1300 740 1380z"/></g>
            <path fill="#e8e5e0" d="M460 1240l20-20 12 30-20 20zM480 1330l30-5 10 70-30-30zM595 1360l15 20-60 60-25-20z"/>
            <g fill="url(#tiny)"><path d="M795 835L880 800 985 815 980 835 900 840 905 900 860 925 845 850 795 860zM1250 790L1370 785 1365 835 1300 820zM1335 840L1370 900 1375 975 1345 970zM400 480L455 515 435 545 395 510zM440 950L480 885 490 960 450 985zM885 430L940 490 925 490zM1160 400L1210 380 1200 430 1160 440zM670 595L780 560 810 540 850 580 800 590 760 570zM870 590L910 550 1100 460 1130 440 1120 460 920 540 870 610z"/></g>
            <g fill="none" stroke="#9fd3f8" stroke-width="2"><path d="M1480 42L1430 70 1420 130 1350 170 1295 170 1240 240 1180 340 1155 420 1100 480 1050 485 990 515 920 560 890 620 860 660 810 705 740 745 710 760 680 830 673 880 640 940 635 960 585 995 560 1060 500 1150 440 1225 425 1300 405 1350 360 1380"/></g>
            <path fill="none" stroke="#9fd3f8" stroke-width="4" d="M1130 450L1090 482 1050 485 990 515 920 562 890 615M440 1225L425 1300 405 1350 370 1375"/>
            <g fill="none" stroke="#fff" stroke-width="1"><path d="M795 42L775 130 750 170 755 250 770 290 795 320M930 290L950 350M405 180L390 260 415 290 410 320M560 1010L530 1040M1080 1120L1060 1180 1000 1230V1270M1180 840L1220 835M1440 810L1510 800M370 1380L460 1430M420 1360L500 1440 610 1310M540 1380L620 1430 660 1400M840 1370L870 1380 950 1400 1000 1430"/></g>
            <g fill="none" stroke="#fff" stroke-width="2"><path d="M575 90L540 130 535 165 475 165 445 200 460 270 440 315 395 340M285 328L235 350 255 430 300 500 325 580 345 910 405 1090 425 1105M300 455L335 575 325 578M300 455L390 475 440 440 460 380M0 960L60 920 70 945 180 970 300 935 340 908M425 1100L405 1170 400 1230 360 1350 335 1440M430 1105L480 1010 530 950 530 915 600 915 675 870 710 910 795 860 800 820 840 770M675 870L680 900 660 970 610 1040 550 1090 515 1160 495 1280 520 1350 525 1454M0 1190L35 1250 30 1300 10 1320 40 1454M710 750L680 860 740 810 760 780 850 710M855 720L860 770 1050 825 1200 772 1370 782 1420 745 1500 730 1553 680M1160 1400L1190 1370 1250 1320 1350 1275 1430 1315 1480 1220 1553 1215"/><path stroke-width="3" d="M1500 42L1480 60 1440 50 1430 110 1350 195 1310 195 1290 240 1215 290 1205 350 1190 405 1150 420 960 485 880 545 835 630 820 670 770 720 710 755M835 630L870 655"/></g>
            <g fill="none" stroke-linejoin="round"><path stroke="#f3c65e" stroke-width="5" d="M0 341L170 341 200 333 285 325 360 340 375 350M555 380L575 388 580 420 600 450 650 480 670 505 710 525 750 560 785 565 800 600 835 630"/><path stroke="#ffe490" stroke-width="3" d="M0 341L170 341 200 333 285 325 360 340 375 350M555 380L575 388 580 420 600 450 650 480 670 505 710 525 750 560 785 565 800 600 835 630"/></g>
          </g>

          <!-- place names -->
          <g class="lbl">
            <text class="t13" x="437" y="609">Isla San</text><text class="t13" x="437" y="622">Lorenzo</text>
            <text class="t13" x="641" y="592">La Punta</text><text class="t13" x="808" y="551">Bellavista</text>
            <text class="t14" x="861" y="576" fill-opacity=".75">Museo Larco</text><text class="t12" x="844" y="588" fill-opacity=".75">Cerrado temporalmente</text>
            <text class="t16" x="848" y="614">San Miguel</text>
            <text class="rd" transform="translate(846 643) rotate(24)">Cto. de Playas</text>
            <text class="green" x="1000" y="594">El Campo</text><text class="green" x="1000" y="608">de Marte</text>
            <text class="t16" x="1073" y="602">La Victoria</text><text class="t15" x="973" y="628">Jesús María</text>
            <text class="t16" x="1003" y="667">San Isidro</text><text class="t16" x="1135" y="667">San Borja</text>
            <text class="t15" x="1028" y="713">Miraflores</text>
            <text class="area" x="1162" y="709">CHACARILLA</text><text class="area" x="1162" y="726">DEL ESTANQUE</text>
            <text class="area" x="1285" y="569">COVIMA</text><text class="mini" x="1379" y="606">LA PLANICIE</text>
            <text class="t15" x="1330" y="626">La Molina</text>
            <text class="rd" transform="translate(1127 641) rotate(-8)">Av. Javier Prado Este</text>
            <text class="t16" x="1143" y="797">Santiago</text><text class="t16" x="1143" y="813">de Surco</text>
            <text class="t16" x="1201" y="837">San Juan de</text><text class="t16" x="1201" y="853">Miraflores</text>
            <text class="t13" x="1056" y="802">Barranco</text>
            <text class="t15" x="1353" y="873">Villa María</text><text class="t15" x="1353" y="888">del Triunfo</text>
            <text class="zone" x="1132" y="906">LA CAMPIÑA</text><text class="zone" x="1086" y="954">VILLA MARINA</text>
            <text class="t16" x="1099" y="934">Chorrillos</text>
            <text class="rd" transform="translate(1538 645) rotate(9)">Av Cieneguilla</text>
            <text class="t15" x="1829" y="664">Cieneguilla</text>
            <text class="green" x="1677" y="941">Parque</text><text class="green" x="1677" y="955">Metropolitano</text><text class="green" x="1677" y="969">Paul Paulet</text>
            <text class="mini" x="1504" y="937">PICAPIEDRA</text><text class="mini" x="1491" y="974">GUAYABO</text>
            <text class="t16" x="1546" y="1003" fill-opacity=".6">Pachacamac</text>
            <use href="#shield119" x="1236" y="568"/><text class="shield" x="1236" y="572">119</text>
            <use href="#shield119" x="1390" y="633"/><text class="shield" x="1390" y="637">119</text>
            <use href="#shield119" x="1678" y="748"/><text class="shield" x="1678" y="752">119</text>
            <use href="#shield119" x="1670" y="773"/><text class="shield" x="1670" y="777">119</text>
            <use href="#shield1s" x="1195" y="600"/><text class="shield" x="1195" y="604">1S</text>
            <use href="#shield1s" x="1195" y="988"/><text class="shield" x="1195" y="992">1S</text>
          </g>
          <path d="M914 590q-9-11-9-17a9 9 0 0 1 18 0q0 6-9 17z" fill="#8f959e"/><path d="M909 577h10M910 571l4-3 4 3zM911 572v4M914 572v4M917 572v4" stroke="#fff" fill="none"/>
          <path d="M999 578q-9-12-9-18a9 9 0 0 1 19 0q0 6-10 18z" fill="#34a15c"/><path d="M999 553l5 9h-4v4h-2v-4h-4z" fill="#fff"/>

          <!-- vehicle track -->
          <g class="geo" transform="translate(860 520) scale(.35714 .33333)" fill="none" stroke="#3d6189" stroke-width="2" stroke-linejoin="round">
            <path d="M815 165L805 155 706 212 745 285 755 345 600 372 555 380 535 410 510 480 520 585 597 577 597 520M755 345L943 322 945 445 975 470 965 520 950 552 893 554 883 432 818 430 818 470 790 532 765 525 720 522 720 516 657 516 655 530 605 535M605 375L755 350 885 328M575 378L580 440 588 480 607 490 592 520 625 572 668 575 675 610 703 650 750 640 770 590 780 570 824 640 806 675 796 713 832 710 878 730 860 780 848 880 880 905 865 915 865 950 893 990 918 1107 990 1085 1018 1085 1042 1095 1038 1115 993 1115 1005 1165 1000 1185 1022 1243 1055 1222 1033 1175 1075 1255 1050 1285 1055 1310 1076 1343 1107 1323 1075 1250 1070 1215 1095 1210M1005 1180L1040 1190M615 378L628 457M437 430L418 468 320 450 308 460 308 490 340 490 340 550 380 562 408 592 485 597 485 560 470 495 508 487M437 430L428 480 428 625 412 633 412 625 473 625 473 614 428 614M520 585L545 545 545 580 530 580 530 560M790 475L810 490M750 640L806 675M770 525L755 550M1095 1300L1112 1285"/>
            <path stroke-width="3" d="M580 377L612 374 628 457M755 346L600 374M510 478L530 415 555 382M850 885L880 905M867 950L893 990M1035 1178L1072 1255M528 578L545 560M750 640L806 672"/>
          </g>
          <path d="M1140 577l20-2-10 17-3-9z" fill="#111"/><path d="M1145 578l4 0-1 4zM1153 577l3 0-2 5zM1148 584l4-1-2 4z" fill="#fff"/>
          <path d="M1242 915l8 4 8-5-5 18z" fill="#4c9a2a"/>
        </svg>
        <div class="zoomer"><button aria-label="Acercar">+</button><button aria-label="Alejar">-</button></div>
        <div class="layers shadow-lg d-flex flex-column align-items-center justify-content-around">
          <button aria-label="Tipo de mapa"><svg width="16" height="14"><use href="#i-map"/></svg></button>
          <button aria-label="Tráfico"><svg width="12" height="15"><use href="#i-light"/></svg></button>
          <button aria-label="Geocercas"><svg width="13" height="13"><use href="#i-poly"/></svg></button>
        </div>
        <div class="credit">Todos los derechos reservados - Telemovil GPS - Mapa proporcionado por Google</div>
      </div>
    </section>
  </main>
</div>

<script>
const icons={
  list:'<svg width="14" height="12"><use href="#i-list"/></svg>',
  park:'<svg width="12" height="13"><rect width="12" height="13" rx="2" fill="currentColor"/><text x="6" y="10" text-anchor="middle" font-size="10" font-weight="700" fill="#fff">P</text></svg>',
  file:'<svg width="11" height="14"><use href="#i-file"/></svg>'};
const rows=[['list','B8O-422','13:18:15'],['park','F2F-952','12:55:04'],['file','F2F-952','12:54:14'],['list','F2F-952','12:49:02'],['park','F2F-952','12:46:42'],['file','F2F-952','12:45:43'],['list','F2F-952','12:42:57'],['file','B8O-422','12:22:08']];
document.getElementById('reports').innerHTML=rows.map(([k,n,t])=>`<li class="d-flex align-items-center">
<span style="color:#868ca0">${icons[k]}</span>
<div class="flex-fill" style="margin-left:15px"><h6>${n}</h6><small>Generado el 16/09/2020 ${t}</small></div>
<div class="d-flex" style="gap:4px">
<button class="act" aria-label="Excel"><svg width="9" height="12"><use href="#i-xls"/></svg></button>
<button class="act" aria-label="PDF"><svg width="9" height="12"><use href="#i-pdf"/></svg></button>
<button class="act del" aria-label="Eliminar"><svg width="11" height="12"><use href="#i-trash"/></svg></button></div></li>`).join('')+'<li></li>';
</script>
</body>
</html>
